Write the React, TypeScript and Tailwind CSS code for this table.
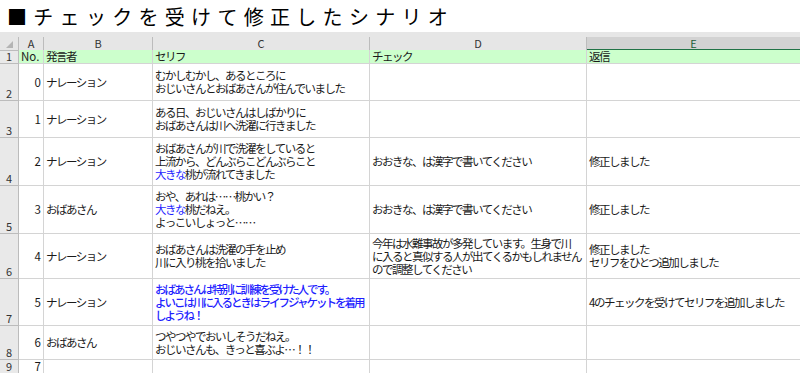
const rows = [
  { n: 2, h: 37, a: "0", b: "ナレーション", c: [["むかしむかし、あるところに"], ["おじいさんとおばあさんが住んでいました"]], d: [], e: [] },
  { n: 3, h: 37, a: "1", b: "ナレーション", c: [["ある日、おじいさんはしばかりに"], ["おばあさんは川へ洗濯に行きました"]], d: [], e: [] },
  {
    n: 4,
    h: 48,
    a: "2",
    b: "ナレーション",
    c: [["おばあさんが川で洗濯をしていると"], ["上流から、どんぶらこどんぶらこと"], ["大きな", "桃が流れてきました"]],
    d: ["おおきな、は漢字で書いてください"],
    e: ["修正しました"],
  },
  {
    n: 5,
    h: 48,
    a: "3",
    b: "おばあさん",
    c: [["おや、あれは……桃かい？"], ["大きな", "桃だねえ。"], ["よっこいしょっと……"]],
    d: ["おおきな、は漢字で書いてください"],
    e: ["修正しました"],
  },
  {
    n: 6,
    h: 45,
    a: "4",
    b: "ナレーション",
    c: [["おばあさんは洗濯の手を止め"], ["川に入り桃を拾いました"]],
    d: ["今年は水難事故が多発しています。生身で川", "に入ると真似する人が出てくるかもしれません", "ので調整してください"],
    e: ["修正しました", "セリフをひとつ追加しました"],
  },
  {
    n: 7,
    h: 47,
    a: "5",
    b: "ナレーション",
    blue: true,
    c: [["おばあさんは特別に訓練を受けた人です。"], ["よいこは川に入るときはライフジャケットを着用"], ["しようね！"]],
    d: [],
    e: ["4のチェックを受けてセリフを追加しました"],
  },
  { n: 8, h: 34, a: "6", b: "おばあさん", c: [["つやつやでおいしそうだねえ。"], ["おじいさんも、きっと喜ぶよ…！！"]], d: [], e: [] },
];

const cols = "grid grid-cols-[19px_25px_109px_217px_217px_1fr]";
const cell = "border-r border-b border-[#d4d4d4] px-[2px] flex flex-col justify-center overflow-hidden";
const rowHead = "border-r border-b border-[#bcbcbc] bg-[#e9e9e9] flex items-end justify-center text-[11px] leading-[13px] tracking-normal text-[#333]";

export default function App() {
  return (
    <div
      className="h-[373px] w-[800px] overflow-hidden bg-white text-[11.5px] leading-[13px] tracking-[-1.5px] text-[#1a1a1a]"
      style={{ fontFamily: '"Noto Sans CJK JP", "Noto Sans", sans-serif' }}
    >
      <div className="flex h-[32px] items-center pl-[7px] text-[20px] tracking-[6.3px] text-black">
        ■チェックを受けて修正したシナリオ
      </div>

      {/* column letters */}
      <div className="h-[5px] bg-[#e6e6e6]" />
      <div className={`${cols} h-[13px] bg-[#e6e6e6] text-[11px] leading-[12px] tracking-normal text-[#333]`}>
        <div className="relative border-r border-b border-[#bcbcbc]">
          <div className="absolute bottom-[2px] right-[5px] h-0 w-0 border-b-[7px] border-l-[7px] border-b-[#b4b4b4] border-l-transparent" />
        </div>
        <div className="border-r border-b border-[#bcbcbc] text-center">A</div>
        <div className="border-r border-b border-[#bcbcbc] text-center">B</div>
        <div className="border-r border-b border-[#bcbcbc] text-center">C</div>
        <div className="border-r border-b border-[#bcbcbc] text-center">D</div>
        <div className="border-b-2 border-[#217346] bg-[#d2d2d2] text-center text-[#1d5e38]">E</div>
      </div>

      {/* header row */}
      <div className={`${cols} h-[14px]`}>
        <div className={rowHead}>1</div>
        <div className="border-r border-b border-[#d4d4d4] bg-[#ccffcc] px-[2px] tracking-normal">No.</div>
        <div className="border-r border-b border-[#d4d4d4] bg-[#ccffcc] px-[2px]">発言者</div>
        <div className="border-r border-b border-[#d4d4d4] bg-[#ccffcc] px-[2px]">セリフ</div>
        <div className="border-r border-b border-[#d4d4d4] bg-[#ccffcc] px-[2px]">チェック</div>
        <div className="border-b border-[#d4d4d4] bg-[#ccffcc] px-[2px]">返信</div>
      </div>

      {rows.map((r) => (
        <div key={r.n} className={cols} style={{ height: r.h }}>
          <div className={rowHead}>{r.n}</div>
          <div className={`${cell} items-end tracking-normal`}>{r.a}</div>
          <div className={cell}>{r.b}</div>
          <div className={`${cell} ${r.blue ? "font-medium tracking-[-2px] text-[#1f1fff]" : ""}`}>
            {r.c.map((line, i) => (
              <div key={i} className="whitespace-nowrap">
                {line.length === 2 ? (
                  <>
                    <span className="text-[#1f1fff]">{line[0]}</span>
                    {line[1]}
                  </>
                ) : (
                  line[0]
                )}
              </div>
            ))}
          </div>
          <div className={`${cell} ${r.d.length > 1 ? "justify-start pt-[3px]" : ""}`}>
            {r.d.map((l) => (
              <div key={l} className="whitespace-nowrap">
                {l}
              </div>
            ))}
          </div>
          <div className="flex flex-col justify-center border-b border-[#d4d4d4] px-[2px]">
            {r.e.map((l) => (
              <div key={l} className="whitespace-nowrap">
                {l}
              </div>
            ))}
          </div>
        </div>
      ))}

      <div className={`${cols} h-[12px] leading-[11px]`}>
        <div className={`${rowHead} leading-[11px]`}>9</div>
        <div className={`${cell} items-end tracking-normal`}>7</div>
        <div className={cell} />
        <div className={cell} />
        <div className={cell} />
        <div className="border-b border-[#d4d4d4]" />
      </div>
    </div>
  );
}
